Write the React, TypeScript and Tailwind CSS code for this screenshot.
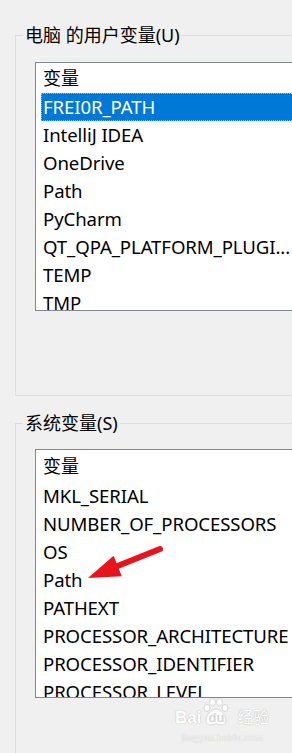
import React from "react";

const userVars = [
  "FREI0R_PATH",
  "IntelliJ IDEA",
  "OneDrive",
  "Path",
  "PyCharm",
  "QT_QPA_PLATFORM_PLUGI...",
  "TEMP",
  "TMP",
];

const sysVars = [
  "MKL_SERIAL",
  "NUMBER_OF_PROCESSORS",
  "OS",
  "Path",
  "PATHEXT",
  "PROCESSOR_ARCHITECTURE",
  "PROCESSOR_IDENTIFIER",
  "PROCESSOR_LEVEL",
];

const font = "font-['Noto_Sans','Noto_Sans_CJK_SC',sans-serif]";

const VarList: React.FC<{ items: string[]; selected?: number; headH: string }> = ({
  items,
  selected,
  headH,
}) => (
  <div className="w-[400px] h-[249px] border border-[#828790] bg-white overflow-hidden">
    <div className={`${headH} flex items-center pl-[7px] text-[18px] text-black`}>变量</div>
    {items.map((name, i) => (
      <div
        key={name}
        className={
          i === selected
            ? "h-[28px] ml-[5px] pl-[1px] flex items-center text-[18.6px] tracking-[-0.1px] text-white bg-[#0078d7] border border-dotted border-[#7fbdf0] whitespace-nowrap"
            : "h-[28px] ml-[5px] pl-[2px] flex items-center text-[18.6px] tracking-[-0.1px] text-black whitespace-nowrap"
        }
      >
        {name}
      </div>
    ))}
  </div>
);

const App: React.FC = () => {
  return (
    <div className={`relative w-[292px] h-[753px] overflow-hidden bg-[#f0f0f0] ${font}`}>
      {/* 用户变量 */}
      <div className="relative mt-[35px] ml-[15px] w-[400px] h-[361px] border border-[#dcdcdc] pt-[26px] pl-[19px]">
        <span className="absolute left-[7px] top-[-14px] px-[2px] bg-[#f0f0f0] text-[18px] leading-[26px] text-black whitespace-nowrap">
          电脑 的用户变量(U)
        </span>
        <VarList items={userVars} selected={0} headH="h-[30px]" />
      </div>

      {/* 系统变量 */}
      <div className="relative mt-[27px] ml-[15px] w-[400px] h-[400px] border border-[#dcdcdc] pt-[25px] pl-[19px]">
        <span className="absolute left-[7px] top-[-14px] px-[2px] bg-[#f0f0f0] text-[18px] leading-[26px] text-black whitespace-nowrap">
          系统变量(S)
        </span>
        <VarList items={sysVars} headH="h-[32px]" />
      </div>

      {/* red arrow */}
      <svg className="absolute left-0 top-0 pointer-events-none" width="292" height="753">
        <line x1="160" y1="549" x2="115" y2="567" stroke="#e8141c" strokeWidth="6" strokeLinecap="round" />
        <polygon points="88,578 113.6,555.8 121.8,576.2" fill="#e8141c" />
      </svg>

      {/* watermark */}
      <div className="absolute left-[175px] top-[707px] flex flex-col items-center text-white whitespace-nowrap pointer-events-none">
        <div className="flex items-end font-['Liberation_Sans','Noto_Sans_CJK_SC',sans-serif] font-bold leading-[22px] [text-shadow:0_0_1px_#bdbdbd,0_0_1px_#bdbdbd]">
          <span className="text-[17px]">Bai</span>
          <span className="relative w-[30px] flex justify-center">
            <svg width="30" height="30" viewBox="0 0 30 30" className="absolute left-0 top-[-10px]">
              <g fill="#fbfbfb" stroke="#cfcfcf" strokeWidth="0.8">
                <ellipse cx="6" cy="11" rx="3" ry="3.6" />
                <ellipse cx="11.5" cy="5" rx="3" ry="3.6" />
                <ellipse cx="18.5" cy="5" rx="3" ry="3.6" />
                <ellipse cx="24" cy="11" rx="3" ry="3.6" />
                <path d="M15 12 C9 12 4 20 5 25 C6 29 11 28 15 27 C19 28 24 29 25 25 C26 20 21 12 15 12 Z" />
              </g>
            </svg>
            <span className="relative text-[13px] text-[#d8d8d8] [text-shadow:none]">du</span>
          </span>
          <span className="ml-[6px] text-[16px] font-normal">经验</span>
        </div>
        <div className="mt-[1px] text-[11px] leading-[14px] text-[#f6f6f6] font-['Liberation_Serif',serif] [text-shadow:0_0_1px_#b8b8b8]">
          jingyan.baidu.com
        </div>
      </div>
    </div>
  );
};

export default App;
